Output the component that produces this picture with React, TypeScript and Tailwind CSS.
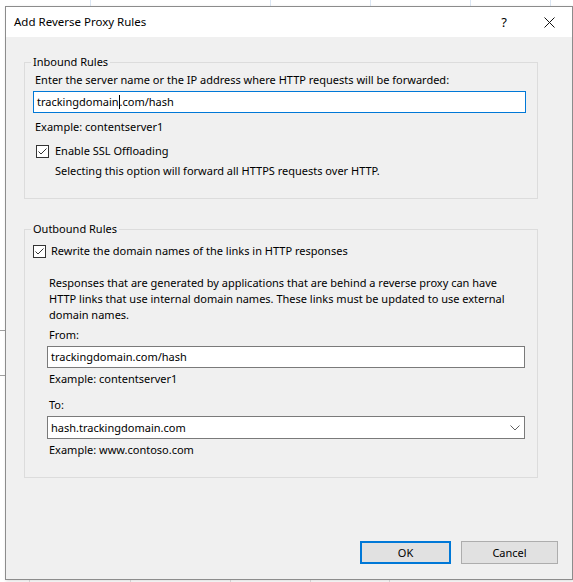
import React from 'react';

const Check = () => (
  <span className="flex h-[13px] w-[13px] shrink-0 items-center justify-center border border-[#333333] bg-white">
    <svg width="11" height="11" viewBox="0 0 11 11">
      <path d="M1.5 5.5 L4 8 L9.5 2.5" fill="none" stroke="#333333" strokeWidth="1" />
    </svg>
  </span>
);

const Line = ({ children, className = '' }: { children: React.ReactNode; className?: string }) => (
  <div className={`h-[16px] leading-[16px] whitespace-nowrap ${className}`}>{children}</div>
);

export default function App() {
  return (
    <div className="relative h-[582px] w-[573px] overflow-hidden bg-white pl-[5px] pt-[6px] font-['Noto_Sans',sans-serif] text-[11px] text-black">
      {/* backdrop: bits of the window behind the dialog */}
      <div className="absolute left-[90px] top-0 h-[6px] w-px bg-[#dbe6f3]" />
      <div className="absolute left-[270px] top-0 h-[6px] w-px bg-[#dbe6f3]" />
      <div className="absolute left-[370px] top-0 h-[6px] w-px bg-[#dbe6f3]" />
      <div className="absolute left-[470px] top-0 h-[6px] w-px bg-[#dbe6f3]" />
      <div className="absolute left-[550px] top-0 h-[6px] w-px bg-[#dbe6f3]" />
      <div className="absolute left-0 top-[330px] h-px w-[5px] bg-[#a0a0a0]" />
      <div className="absolute left-0 top-[375px] h-px w-[5px] bg-[#a0a0a0]" />
      <div className="absolute bottom-0 left-[29px] h-[2px] w-px bg-[#e0e0e0]" />
      <div className="absolute bottom-0 left-[130px] h-[2px] w-px bg-[#e0e0e0]" />
      <div className="absolute bottom-0 left-[230px] h-[2px] w-px bg-[#e0e0e0]" />
      <div className="absolute bottom-0 left-[310px] h-[2px] w-px bg-[#e0e0e0]" />
      <div className="absolute bottom-0 left-[389px] h-[2px] w-px bg-[#e0e0e0]" />

      <div className="relative flex h-[574px] w-[568px] flex-col border border-[#8c8c8c] bg-[#f0f0f0] shadow-[1px_1px_3px_rgba(0,0,0,0.15)]">
        {/* title bar */}
        <div className="flex h-[30px] items-center bg-white pl-[8px] pr-[17px]">
          <span className="flex-1 text-[11.5px] leading-[16px]">Add Reverse Proxy Rules</span>
          <span className="mr-[37px] text-[13px] leading-[16px]">?</span>
          <svg width="11" height="11" viewBox="0 0 11 11">
            <path d="M0.5 0.5 L10.5 10.5 M10.5 0.5 L0.5 10.5" stroke="#111111" strokeWidth="1" />
          </svg>
        </div>

        <div className="flex flex-1 flex-col pl-[18px] pr-[34px] pt-[17px]">
          {/* inbound */}
          <fieldset className="border border-[#dcdcdc] pb-[19px] pl-[8px] pr-[11px]">
            <legend className="-ml-[2px] px-[2px] leading-[16px]">Inbound Rules</legend>
            <Line className="ml-[2px] mt-[2px]">Enter the server name or the IP address where HTTP requests will be forwarded:</Line>
            <div className="mt-[3px] flex h-[22px] items-center border border-[#0078d7] bg-white pl-[3px]">
              <span className="leading-[16px]">trackingdomain</span>
              <span className="h-[14px] w-px bg-black" />
              <span className="leading-[16px]">.com/hash</span>
            </div>
            <Line className="ml-[2px] mt-[6px]">Example: contentserver1</Line>
            <div className="ml-[3px] mt-[8px] flex h-[16px] items-center gap-[6px]">
              <Check />
              <span className="leading-[16px]">Enable SSL Offloading</span>
            </div>
            <Line className="ml-[22px] mt-[4px]">Selecting this option will forward all HTTPS requests over HTTP.</Line>
          </fieldset>

          {/* outbound */}
          <fieldset className="mt-[22px] border border-[#dcdcdc] pb-[19px] pl-[8px] pr-[11px]">
            <legend className="-ml-[2px] px-[2px] leading-[16px]">Outbound Rules</legend>
            <div className="mt-[6px] flex h-[16px] items-center gap-[5px]">
              <Check />
              <span className="leading-[16px]">Rewrite the domain names of the links in HTTP responses</span>
            </div>
            <div className="ml-[14px] mr-[1px] mt-[16px]">
              <p className="ml-[2px] leading-[16px]">
                Responses that are generated by applications that are behind a reverse proxy can have HTTP links that use internal domain names. These links must be updated to use external domain names.
              </p>
              <Line className="ml-[2px] mt-[4px]">From:</Line>
              <div className="mt-[3px] flex h-[22px] items-center border border-[#7a7a7a] bg-white pl-[3px] leading-[16px]">
                trackingdomain.com/hash
              </div>
              <Line className="ml-[2px] mt-[3px]">Example: contentserver1</Line>
              <Line className="ml-[2px] mt-[10px]">To:</Line>
              <div className="mt-[3px] flex h-[23px] items-center border border-[#7a7a7a] bg-white pl-[3px] pr-[4px]">
                <span className="flex-1 leading-[16px]">hash.trackingdomain.com</span>
                <svg width="10" height="6" viewBox="0 0 10 6">
                  <path d="M0.5 0.5 L5 5 L9.5 0.5" fill="none" stroke="#606060" strokeWidth="1" />
                </svg>
              </div>
              <Line className="ml-[2px] mt-[3px]">Example: www.contoso.com</Line>
            </div>
          </fieldset>

          <div className="flex-1" />
        </div>

        {/* buttons */}
        <div className="flex justify-end gap-[10px] pb-[15px] pr-[14px]">
          <button className="h-[23px] w-[91px] border-2 border-[#0078d7] bg-[#e1e1e1] leading-[16px]">OK</button>
          <button className="h-[23px] w-[97px] border border-[#adadad] bg-[#e1e1e1] leading-[16px]">Cancel</button>
        </div>
      </div>
    </div>
  );
}
